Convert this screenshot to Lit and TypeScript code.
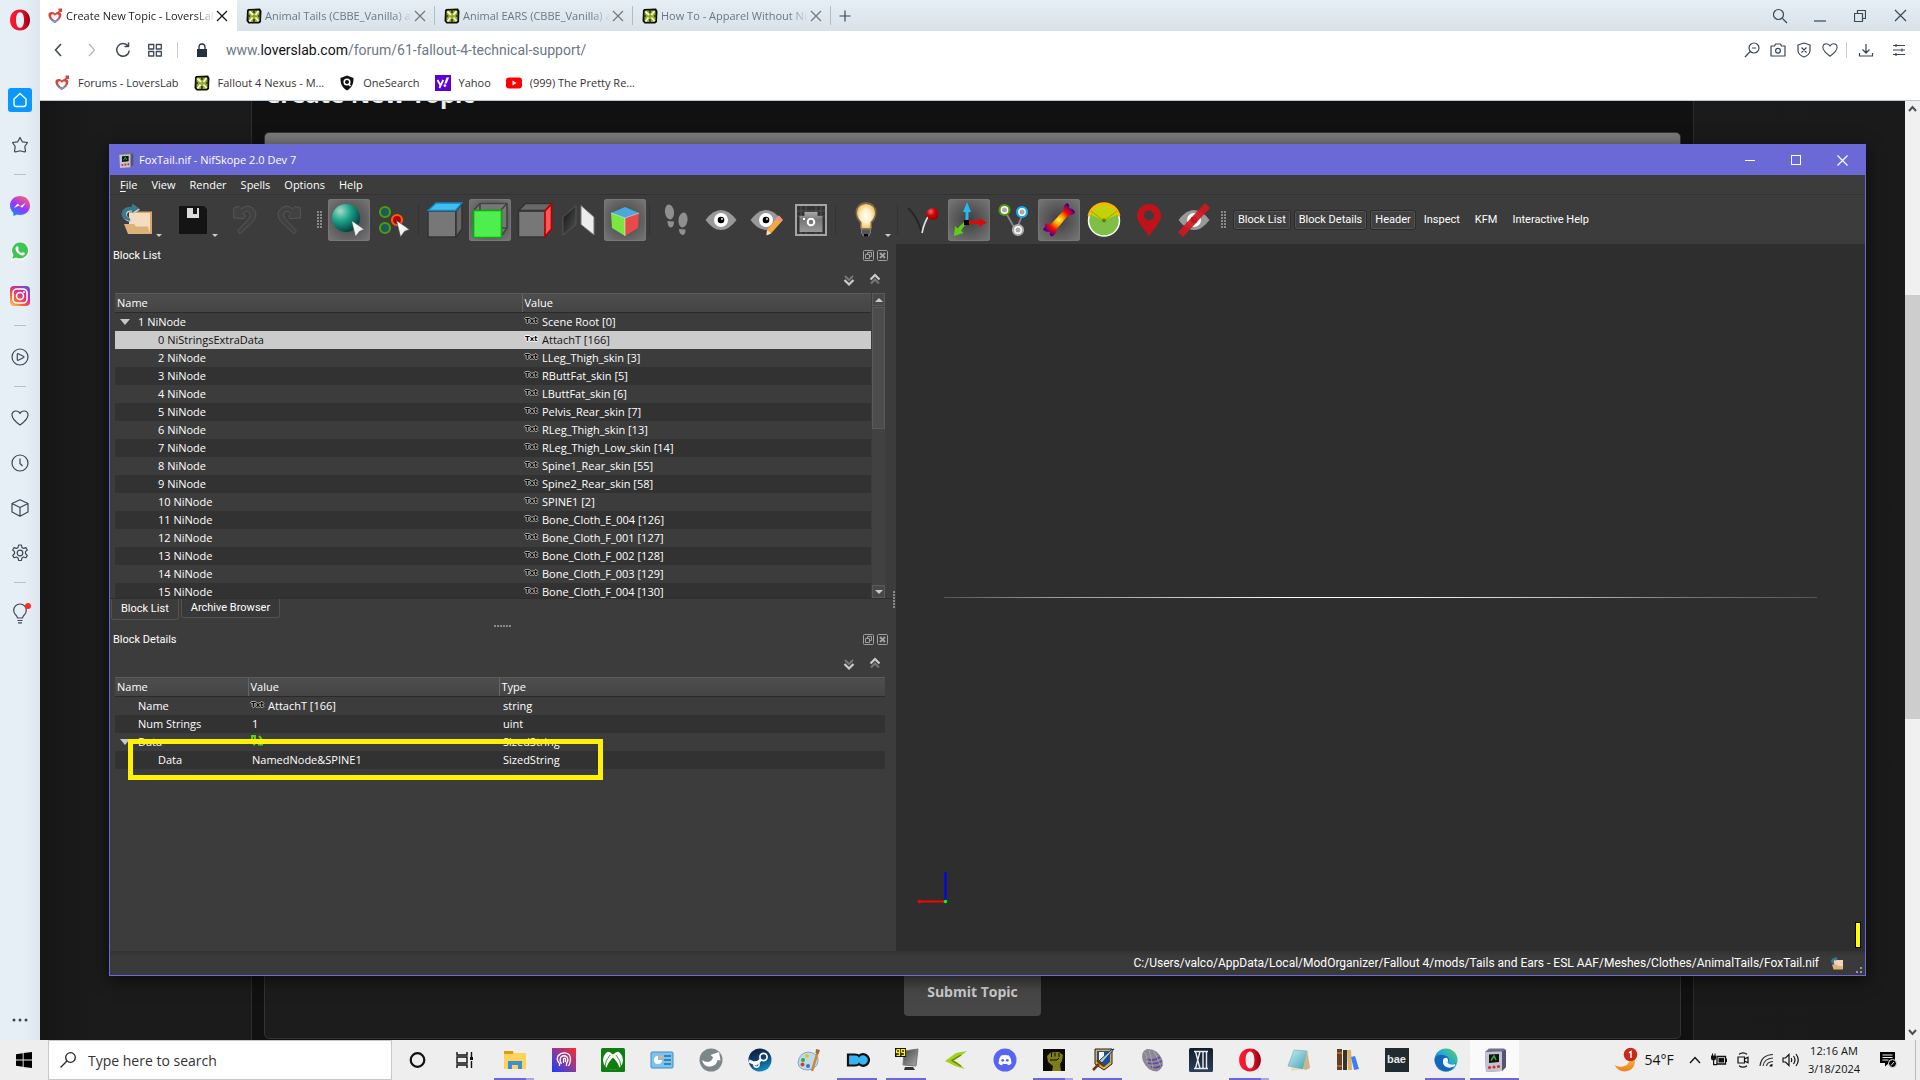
import { LitElement, html, svg, css } from "lit";
import { customElement } from "lit/decorators.js";
import { classMap } from "lit/directives/class-map.js";

const icon = (w: number, h: number, body: unknown) =>
  html`<svg class="ico" width=${w} height=${h} viewBox=${`0 0 ${w} ${h}`} aria-hidden="true">${body}</svg>`;

/* ---------- shared gradients ---------- */
const gradients = html`
  <svg class="defs" width="0" height="0" aria-hidden="true">
    <defs>
      <linearGradient id="gOpera" x1="0" x2="1"><stop offset="0" stop-color="#ff1b2d" /><stop offset="0.6" stop-color="#e3112a" /><stop offset="1" stop-color="#8f0012" /></linearGradient>
      <linearGradient id="gMess" x1="0.2" y1="1" x2="0.8" y2="0"><stop offset="0" stop-color="#0a8cff" /><stop offset="0.5" stop-color="#a033ff" /><stop offset="1" stop-color="#ff6a62" /></linearGradient>
      <linearGradient id="gInsta" x1="0" y1="1" x2="0.8" y2="0"><stop offset="0" stop-color="#ffd45c" /><stop offset="0.35" stop-color="#f5603c" /><stop offset="0.65" stop-color="#d62e88" /><stop offset="1" stop-color="#6b52d0" /></linearGradient>
      <radialGradient id="gSphere" cx="0.3" cy="0.25" r="0.85"><stop offset="0" stop-color="#a5dcc8" /><stop offset="0.45" stop-color="#18a088" /><stop offset="1" stop-color="#033" /></radialGradient>
      <linearGradient id="gCursor" x1="0" y1="0" x2="1" y2="1"><stop offset="0" stop-color="#fff" /><stop offset="0.6" stop-color="#eee" /><stop offset="1" stop-color="#888" /></linearGradient>
      <linearGradient id="gDarkPane" x1="0" y1="0" x2="1" y2="1"><stop offset="0" stop-color="#111" /><stop offset="1" stop-color="#555" /></linearGradient>
      <radialGradient id="gBulb" cx="0.5" cy="0.5" r="0.55"><stop offset="0" stop-color="#fffdf4" /><stop offset="0.5" stop-color="#fff0cf" /><stop offset="1" stop-color="#f8bd50" /></radialGradient>
      <radialGradient id="gBall" cx="0.35" cy="0.3" r="0.7"><stop offset="0" stop-color="#ff6a6a" /><stop offset="0.5" stop-color="#d40000" /><stop offset="1" stop-color="#900" /></radialGradient>
      <radialGradient id="gBone" gradientUnits="userSpaceOnUse" cx="18" cy="18" r="17"><stop offset="0" stop-color="#ff3" /><stop offset="0.3" stop-color="#ff9800" /><stop offset="0.6" stop-color="#f01000" /><stop offset="0.85" stop-color="#a00050" /><stop offset="1" stop-color="#4b0082" /></radialGradient>
      <linearGradient id="gCam" x1="0" y1="0" x2="0" y2="1"><stop offset="0" stop-color="#aaa" /><stop offset="0.4" stop-color="#777" /><stop offset="1" stop-color="#999" /></linearGradient>
      <linearGradient id="gArt" x1="0" y1="1" x2="1" y2="0"><stop offset="0" stop-color="#1a3cff" /><stop offset="0.5" stop-color="#8a3a9c" /><stop offset="1" stop-color="#ff2a2a" /></linearGradient>
      <linearGradient id="gSteam" x1="0" y1="0" x2="0.4" y2="1"><stop offset="0" stop-color="#0c1438" /><stop offset="0.6" stop-color="#0f4575" /><stop offset="1" stop-color="#1287b8" /></linearGradient>
      <linearGradient id="gEdge" x1="0" y1="1" x2="1" y2="0"><stop offset="0" stop-color="#0a59a4" /><stop offset="0.5" stop-color="#1ea5de" /><stop offset="1" stop-color="#5fd35a" /></linearGradient>
      <linearGradient id="gMoon" x1="0" y1="0" x2="0" y2="1"><stop offset="0" stop-color="#f9c440" /><stop offset="1" stop-color="#f07f1e" /></linearGradient>
      <linearGradient id="gPad" x1="0" y1="0" x2="1" y2="1"><stop offset="0" stop-color="#c9eef2" /><stop offset="1" stop-color="#3fa3b8" /></linearGradient>
      <linearGradient id="gXii" x1="0" y1="0" x2="0" y2="1"><stop offset="0" stop-color="#121d2c" /><stop offset="1" stop-color="#2c4058" /></linearGradient>
      <linearGradient id="gScreen" x1="0" y1="0" x2="1" y2="1"><stop offset="0" stop-color="#444" /><stop offset="1" stop-color="#aaa" /></linearGradient>
    </defs>
  </svg>`;

/* ---------- favicons ---------- */
const heartFav = icon(16, 16, svg`
  <path d="M8 15 C3 12 1 9 1.500 6 C2.200 3.800 5.500 3 8 5.500 C10 3.500 13.800 3.500 14.300 6.500 C14.600 9.500 12 12.500 8 15Z" fill="#d9443a"/>
  <path d="M2 9 C3 12 5.500 13.700 8 15 C10.500 13.500 12.500 12 13.800 9 C11.500 11.500 10 12.300 8 12.700 C6 12.300 4 11.500 2 9Z" fill="#6b9fd8"/>
  <path d="M8 12.500 C5.200 10.800 4 9 4.200 7.500 C4.500 5.700 7 6.200 8 8 C9 6.200 11.500 6.200 11.800 7.800 C11.900 9.500 10.300 11.300 8 12.500Z" fill="#fff"/>
  <path d="M10.500 5 L14 1.500 M11.500 1.300 h2.700 v2.700" stroke="#d9443a" stroke-width="1.700" fill="none"/>`);
const nexusFav = icon(16, 16, svg`
  <path d="M2 1 L14 0.500 L15.500 3 L15 14 L13 15.500 L2.500 15.500 L0.500 13 L1 2.500Z" fill="#0b0b0b"/>
  <path d="M3 2.500 H13 L13.500 4 V12.500 L12.500 14 H3.500 L2.500 12.500 V3.500Z" fill="#94a92b"/>
  <path d="M3.500 3.500 L7 7 M12.500 3 L9.500 7 M12.500 13 L9.500 9.500 M3.500 13.500 L6.500 9.500" stroke="#f4f7df" stroke-width="1.800"/>
  <path d="M8 1.500 V5 M8 11 V14.500 M1.500 8 H4 M12 8 H14.500" stroke="#2c3310" stroke-width="1.500"/>`);
const shieldFav = icon(16, 16, svg`
  <path d="M8 0.500 L14.500 3 C14.700 9 12.500 13 8 15.500 C3.500 13 1.300 9 1.500 3Z" fill="#111"/>
  <circle cx="8" cy="7" r="2.800" fill="none" stroke="#fff" stroke-width="1.500"/><path d="M9.500 8.700 L11.500 11" stroke="#fff" stroke-width="1.500"/>`);
const yahooFav = icon(16, 16, svg`
  <rect width="16" height="16" fill="#5f01d1"/>
  <path d="M2.500 5 L5.300 10 M8.200 5 L4.400 13" stroke="#fff" stroke-width="1.800" fill="none"/>
  <path d="M11.500 2.500 h2.600 l-2.500 6 h-2.200Z" fill="#fff"/><circle cx="9.900" cy="10.600" r="1.300" fill="#fff"/>`);
const youtubeFav = icon(16, 16, svg`<rect y="2.500" width="16" height="11" rx="3" fill="#f00"/><path d="M6.500 5.500 L10.500 8 L6.500 10.500Z" fill="#fff"/>`);

/* ---------- line icons ---------- */
const line = (w: number, body: unknown) =>
  html`<svg class="ico line" width=${w} height=${w} viewBox=${`0 0 ${w} ${w}`} aria-hidden="true">${body}</svg>`;
const crossIcon = line(12, svg`<path d="M1 1 L11 11 M11 1 L1 11"/>`);
const heartLine = (w: number) => html`<svg class="ico line" width=${w} height=${w} viewBox="0 0 18 18" aria-hidden="true">
  <path d="M9 16 C4 12.500 1 9.500 1 6 C1 3.500 2.800 2 5 2 C6.800 2 8.300 3 9 4.500 C9.700 3 11.200 2 13 2 C15.200 2 17 3.500 17 6 C17 9.500 14 12.500 9 16Z"/></svg>`;

type Side = { name: string; art?: unknown; kind?: string };
const sideItems: Side[] = [
  { name: "Home", kind: "home", art: line(16, svg`<path d="M2 7 L8 1.500 L14 7 V12 Q14 14.500 11.500 14.500 H4.500 Q2 14.500 2 12Z" stroke="#fff" stroke-width="1.400"/>`) },
  { name: "Speed Dials", art: line(18, svg`<path d="M9 1.500 L11.300 5.800 L16.500 6.500 L13.800 10.500 L14.500 15.500 Q14 16.500 9 14.800 Q4 16.500 3.500 15.500 L4.200 10.500 L1.500 6.500 L6.700 5.800Z"/>`) },
  { name: "", kind: "rule" },
  { name: "Messenger", art: icon(20, 20, svg`<path d="M10 0 C15.700 0 20 4.200 20 9.500 C20 15 15.700 19 10 19 Q8.500 19 7.200 18.600 L3.500 20 L3.300 16.700 C1.200 15 0 12.500 0 9.500 C0 4.200 4.300 0 10 0Z" fill="url(#gMess)"/><path d="M4 12 L7.500 7.500 L10.500 10 L15.500 7 L12.300 11.800 L9.200 9.500Z" fill="#fff"/>`) },
  { name: "WhatsApp", art: icon(20, 20, svg`<path d="M1 19.500 L2.500 14.500 A8.800 8.800 0 1 1 5.800 17.900Z" fill="#fff"/><path d="M10.200 1.500 a8 8 0 1 1 -4 15 L2.200 17.800 L3.500 14 A8 8 0 0 1 10.200 1.500Z" fill="#3fc552"/><path d="M6.500 5.500 Q8 4.500 8.500 6.500 Q9 7.500 8 8.500 Q9 11 11.500 12 Q12.500 10.800 13.200 11.300 Q15.500 12 14.500 13.500 Q13 15.300 9.800 13.500 Q5.500 11 5.500 7.500 Q5.600 6 6.500 5.500Z" fill="#fff"/>`) },
  { name: "Instagram", art: icon(20, 20, svg`<rect width="20" height="20" rx="4" fill="url(#gInsta)"/><rect x="3" y="3" width="14" height="14" rx="4" fill="none" stroke="#fff" stroke-width="1.600"/><circle cx="10" cy="10" r="3.500" fill="none" stroke="#fff" stroke-width="1.600"/><circle cx="14" cy="6" r="1" fill="#fff"/>`) },
  { name: "", kind: "rule" },
  { name: "Player", art: line(18, svg`<circle cx="9" cy="9" r="8"/><path d="M6.300 6.200 Q6.500 5.500 7.300 5.800 L12.700 8.500 Q13.200 9 12.700 9.500 L7.300 12.200 Q6.500 12.500 6.300 11.800Z"/>`) },
  { name: "", kind: "rule" },
  { name: "Bookmarks", art: heartLine(18) },
  { name: "History", art: line(18, svg`<circle cx="9" cy="9" r="8"/><path d="M9 4.500 V9.500 L11.500 12"/>`) },
  { name: "Extensions", art: line(18, svg`<path d="M9 0.800 L17 4.500 V13 L9 17.200 L1 13 V4.500Z M1 4.500 L9 8.500 L17 4.500 M9 8.500 V17"/>`) },
  { name: "Settings", art: line(18, svg`<circle cx="9" cy="9" r="2.800"/><path d="M7.600 1 h2.800 l0.500 2.400 l1.700 1 l2.300-0.800 l1.400 2.400 l-1.800 1.600 v2.200 l1.800 1.600 l-1.400 2.400 l-2.300-0.800 l-1.700 1 l-0.500 2.500 h-2.800 l-0.500-2.500 l-1.700-1 l-2.300 0.800 l-1.400-2.400 l1.800-1.600 v-2.200 l-1.800-1.600 l1.400-2.400 l2.300 0.800 l1.700-1Z"/>`) },
  { name: "", kind: "rule" },
  { name: "Tips", art: html`<svg class="ico line" width="24" height="24" viewBox="0 0 24 24" aria-hidden="true"><path d="M9.500 16 Q9.300 14.500 7.800 13 A6.300 6.300 0 1 1 16.200 13 Q14.700 14.500 14.500 16Z M9.500 18.500 h5 M10 20.800 h4"/><circle cx="20" cy="4" r="3" fill="#ff2d20" stroke="none"/></svg>` },
];

const operaLogo = (w: number, h: number) => html`<svg class="ico" width=${w} height=${h} viewBox="0 0 22 22" aria-hidden="true"><path fill-rule="evenodd" d="M11 0.500 C17 0.500 21 5 21 11 C21 17 17 21.500 11 21.500 C5 21.500 1 17 1 11 C1 5 5 0.500 11 0.500Z M11 3.200 C8.300 3.200 7 6.500 7 11 C7 15.500 8.300 18.800 11 18.800 C13.700 18.800 15 15.500 15 11 C15 6.500 13.700 3.200 11 3.200Z" fill="url(#gOpera)"/></svg>`;

/* ---------- NifSkope toolbar art, 36px grid ---------- */
const cursor = svg`<path d="M20.500 18.500 L33.500 27.500 L28.500 29.500 L24.500 35Z" fill="url(#gCursor)" stroke="#444" stroke-width="0.600"/>`;
const ring = (x: number, y: number, c: string, r = 5) =>
  svg`<circle cx=${x} cy=${y} r=${r} fill="#fff" stroke=${c} stroke-width="2.200"/><circle cx=${x} cy=${y} r="2.500" fill="#aaa"/>`;
const eye = svg`<path d="M2.500 18 Q10 8 18 8 Q26 8 33.500 18 Q26 28 18 28 Q10 28 2.500 18Z" fill="#999"/><circle cx="18" cy="18" r="7" fill="#fff"/><circle cx="18" cy="18" r="3.300" fill="#000"/><circle cx="19" cy="17" r="0.900" fill="#fff"/>`;
const undoPath = "M13.500 31.500 L26.500 19 Q31.500 12 26 6.500 Q20 1.500 14.500 7 L12 4.500 L7 5.500 L6.500 16 L17 16.500 L18.500 14 L16 11.500 Q20 7.500 22.500 10.500 Q24.500 13 22 16.500 L11 28.500 Q11 31.500 13.500 31.500Z";
const grid36 = (body: unknown) => icon(36, 36, body);

type Tool = { name: string; art?: unknown; kind?: "sep" | "grip" | "split"; on?: boolean };
const tools: Tool[] = [
  { name: "Open", kind: "split", art: grid36(svg`<path d="M10 10 H33 V31 H10Z" fill="#f3dcc0"/><path d="M31 10 h2 v22 h-2Z" fill="#dba868"/><path d="M10 9.500 H33 V11 H10Z" fill="#dba868"/><path d="M5 22 H15 L17 24.500 H29 L31 32 H9Z" fill="#dcb277"/><path d="M12 20 Q3 18.500 3.500 12 Q5 4.500 14 5.500 V2.500 L21 7.500 L14 12.500 V9.500 Q8 9 8 13 Q8.500 16 12.500 17Z" fill="#cfcfcf"/><path d="M11 19 Q2 17 2.500 11.500 Q4 4 13 4.800 V1.800 L20 6.500 L13 11 V8.500 Q7 8 7 12 Q7.500 15.500 11 16.500Z" fill="#367a8c"/>`) },
  { name: "Save", kind: "split", art: grid36(svg`<path d="M4 4 H29 L32 7 V32 H4Z" fill="#141414"/><path d="M12 6 h12 v10 h-12Z" fill="#dcdcdc"/><path d="M18 6 h4 v6 h-4Z" fill="#141414"/>`) },
  { name: "Undo", art: grid36(svg`<path d=${undoPath} fill="#414141" stroke="#575757"/>`) },
  { name: "Redo", art: grid36(svg`<path d=${undoPath} transform="matrix(-1 0 0 1 35 0)" fill="#414141" stroke="#575757"/>`) },
  { name: "", kind: "grip" },
  { name: "Select Object", on: true, art: grid36(svg`<circle cx="15" cy="16" r="14" fill="url(#gSphere)"/>${cursor}`) },
  { name: "Select Vertex", art: grid36(svg`<circle cx="9" cy="10" r="5" fill="#1d5a5a" stroke="#4f9a0c" stroke-width="2.200"/><circle cx="9" cy="26" r="5" fill="#1d5a5a" stroke="#4f9a0c" stroke-width="2.200"/><circle cx="21" cy="18" r="5" fill="#b00000" stroke="#ff5a10" stroke-width="2.200"/>${cursor}`) },
  { name: "", kind: "sep" },
  { name: "View Top", art: grid36(svg`<path d="M1 9 h28 v26 h-28Z" fill="#777" stroke="#333" stroke-width="1.500"/><path d="M29 9 L35 1.500 V27 L29 35Z" fill="#666" stroke="#333" stroke-width="1.500"/><path d="M1 8.500 L9 1 H35 L28.500 8.500Z" fill="#42bdf2" stroke="#1187bd" stroke-width="1.300"/>`) },
  { name: "View Front", on: true, art: grid36(svg`<path d="M2 8 L8 1.500 H35 V26 L30 33 M35 1.500 L29 8 M8 2 V26 M8 26 H35" fill="#888" fill-opacity="0.600" stroke="#444" stroke-width="1.700"/><path d="M1.500 8.500 h28 v27 h-28Z" fill="#4eee4e" stroke="#0bac0b" stroke-width="1.700"/>`) },
  { name: "View Side", art: grid36(svg`<path d="M1.500 9 h27 v26 h-27Z" fill="#777" stroke="#333" stroke-width="1.500"/><path d="M1.500 8.500 L8.500 1.500 H35 L28 8.500Z" fill="#686868" stroke="#333" stroke-width="1.500"/><path d="M28 9 L34.500 2 V27 L28 34.500Z" fill="#f45a5a" stroke="#b90000" stroke-width="1.700"/>`) },
  { name: "Flip View", art: grid36(svg`<path d="M1 15 L14 3.500 V22.500 L1 33Z" fill="url(#gDarkPane)" stroke="#555"/><path d="M19 3.500 L32 15 V33 L19 22.500Z" fill="#ececec" stroke="#777"/>`) },
  { name: "Perspective", on: true, art: grid36(svg`<path d="M4 11 L18 5 L32 11 L18 16Z" fill="#49a8dc"/><path d="M4 11 L18 16 V34 L5 26Z" fill="#79e642"/><path d="M32 11 L18 16 V34 L31 26Z" fill="#e84a4a"/><path d="M4 11 L18 16 L32 11 M18 16 V34" stroke="#fff" stroke-opacity="0.500" fill="none"/>`) },
  { name: "", kind: "sep" },
  { name: "Walk", art: grid36(svg`<g fill="#8f8f8f"><ellipse cx="11.500" cy="10" rx="4.500" ry="7.500" transform="rotate(-8 11.500 10)"/><path d="M9.500 19 L16 19.500 Q16 25 13 25.500 Q9.500 25 9.500 19Z"/><ellipse cx="25" cy="18" rx="4.500" ry="7.500" transform="rotate(8 25 18)"/><path d="M21 27 L27.500 27.500 Q27.500 33 24.500 33 Q21 32 21 27Z"/></g>`) },
  { name: "View User", art: grid36(eye) },
  { name: "Edit User View", art: grid36(svg`${eye}<path d="M31 13.500 L35 18 L23 31.500 L18.500 33 L19 28Z" fill="#f4a93c"/><path d="M31 13.500 L34 17.500 L31.500 20 L28 16.500Z" fill="#f28a9a"/><path d="M19 28 L23 31.500 L18.500 33.500Z" fill="#f4dfb8"/>`) },
  { name: "Screenshot", art: grid36(svg`<path d="M3 3 h30 v30 h-30Z" fill="#333" stroke="#a5a5a5" stroke-width="2"/><path d="M8 4 V32 M13 4 V32 M23 4 V32 M28 4 V32 M4 9 H32 M4 14 H32" stroke="#555"/><path d="M6.500 14 H11.500 V10 H24.500 V14 H29.500 V30 H6.500Z" fill="url(#gCam)"/><circle cx="18" cy="20" r="3.300" fill="#777" stroke="#fff" stroke-width="2"/><rect x="10" y="16" width="2" height="2" fill="#fff"/>`) },
  { name: "", kind: "sep" },
  { name: "Lighting", kind: "split", art: grid36(svg`<path d="M18 0 Q28.500 1 28.500 11 Q28 17 24 21 V27 H12 V21 Q8 17 7.500 11 Q7.500 1 18 0Z" fill="#a38a52" opacity="0.600"/><path d="M18 2 Q27 3 27 11 Q26.500 16 22.500 20 V26 H13.500 V20 Q9.500 16 9 11 Q9 3 18 2Z" fill="url(#gBulb)"/><path d="M13.500 27 h9 v4 l-2 3 h-5 l-2 -3Z" fill="#555" stroke="#999" stroke-width="0.700"/><rect x="16" y="32" width="4" height="2.500" fill="#000"/>`) },
  { name: "", kind: "sep" },
  { name: "Show Hidden", art: grid36(svg`<path d="M2 6 Q11 14 16 31" stroke="#262626" stroke-width="2" fill="none"/><path d="M16 31 Q18 20 24 12" stroke="#ddd" stroke-width="1.800" fill="none"/><circle cx="26.500" cy="12" r="6" fill="url(#gBall)"/>`) },
  { name: "Show Axes", on: true, art: grid36(svg`<path d="M14.500 19 V10 H12 L16 0 L20 10 H17.500 V19Z" fill="#29b6f6"/><path d="M17 18.800 H28 V16 L36 20.500 L28 25 V22 H17Z" fill="#e00808"/><path d="M15.500 21 L10 28.500 L12.500 31 L3 34 L4 24 L6.500 26.500 L13.500 19.500Z" fill="#5fcc18"/><rect x="13" y="18" width="5" height="5" fill="#000"/>`) },
  { name: "Show Nodes", art: grid36(svg`<path d="M9 9 L20 29 L27 11" stroke="#888" stroke-width="1.800" fill="none"/>${ring(8.5, 8, "#4f9a0c")}${ring(26, 10, "#17a6ee")}${ring(22, 28, "#aaa")}`) },
  { name: "Show Constraints", on: true, art: grid36(svg`<path d="M4 25 Q3 21 7 21.500 Q9 22 10 22 L22 9 Q22 3 26 1 Q29 2 28 6 Q34 7 34 11 Q31 14 27 13.500 L16 27 Q16 32 11 34.500 Q8 34 9 30 Q3 30 2 27Z" fill="url(#gBone)"/>`) },
  { name: "Show Bounds", art: grid36(svg`<circle cx="18" cy="18.500" r="15.500" fill="#7fbf45" stroke="#fff" stroke-width="1.500"/><path d="M3.500 12 A15.500 15.500 0 0 1 32.500 12 L18 19Z" fill="#c3d208"/><path d="M2.800 14 A15.500 15.500 0 0 1 33.200 14" fill="none" stroke="#ffb300" stroke-width="2.500"/><path d="M5 9 L18 19 L31 9" stroke="#94a800" fill="none"/><circle cx="18" cy="18.500" r="2" fill="#6a7a10"/>`) },
  { name: "Show Markers", art: grid36(svg`<path fill-rule="evenodd" d="M18 2 C25 2 30 7 30 14 C30 20 24 25 18 34.500 C12 25 6 20 6 14 C6 7 11 2 18 2Z M18 8.500 A5 5 0 1 0 18 18.500 A5 5 0 1 0 18 8.500Z" fill="#c1121c"/>`) },
  { name: "Hide All", art: grid36(svg`${eye}<path d="M29 1 L34 6 L7 35 L2 30Z" fill="#cf1820" fill-opacity="0.930"/>`) },
  { name: "", kind: "grip" },
];

const panelToggles = [
  ["Block List", true], ["Block Details", true], ["Header", true], ["Inspect", false], ["KFM", false], ["Interactive Help", false],
] as [string, boolean][];

const blocks: [string, string][] = [
  ["1 NiNode", "Scene Root [0]"],
  ["0 NiStringsExtraData", "AttachT [166]"],
  ["2 NiNode", "LLeg_Thigh_skin [3]"],
  ["3 NiNode", "RButtFat_skin [5]"],
  ["4 NiNode", "LButtFat_skin [6]"],
  ["5 NiNode", "Pelvis_Rear_skin [7]"],
  ["6 NiNode", "RLeg_Thigh_skin [13]"],
  ["7 NiNode", "RLeg_Thigh_Low_skin [14]"],
  ["8 NiNode", "Spine1_Rear_skin [55]"],
  ["9 NiNode", "Spine2_Rear_skin [58]"],
  ["10 NiNode", "SPINE1 [2]"],
  ["11 NiNode", "Bone_Cloth_E_004 [126]"],
  ["12 NiNode", "Bone_Cloth_F_001 [127]"],
  ["13 NiNode", "Bone_Cloth_F_002 [128]"],
  ["14 NiNode", "Bone_Cloth_F_003 [129]"],
  ["15 NiNode", "Bone_Cloth_F_004 [130]"],
];

const txt = html`<span class="txt">Txt</span>`;
const expander = html`<button class="twist" aria-label="Collapse">${icon(10, 6, svg`<path d="M0 0 H10 L5 6Z" fill="#c8c8c8"/>`)}</button>`;
const foxIcon = (s: number) => html`<svg class="ico" width=${s} height=${s} viewBox="0 0 24 24" aria-hidden="true">
  <path d="M2 4 L6 0.500 H21 L23 2 V19 L19 23 L3 24Z" fill="#6f6f8c"/><path d="M2 4 L19 3.500 V23 L3 24Z" fill="#c3c3d4"/><path d="M19 3.500 L23 2 V19 L19 23Z" fill="#54546e"/><path d="M6 6.500 L16 6 V14 L6 15Z" fill="#101510"/><path d="M8 12.500 L11 8 L13 12" stroke="#3fae3f" stroke-width="1.500" fill="none"/><circle cx="6.500" cy="19.500" r="1.600" fill="#c33"/><circle cx="11" cy="19" r="1.600" fill="#c33"/><circle cx="15.500" cy="18.500" r="1.600" fill="#c33"/></svg>`;

/* ---------- taskbar ---------- */
const tb = (body: unknown) => icon(24, 24, body);
type App = { name: string; art: unknown; run?: "open" | "multi"; active?: boolean };
const apps: App[] = [
  { name: "Cortana", art: tb(svg`<ellipse cx="12.500" cy="12" rx="6.800" ry="6.800" fill="none" stroke="#111" stroke-width="2.200"/>`) },
  { name: "Task View", art: tb(svg`<path d="M3 4 v3 h10 v-3 M3 20 v-3 h10 v3 M3 9 h10 v6 h-10Z M17.500 4 v5 M17.500 13 v7" fill="none" stroke="#111" stroke-width="1.400"/><rect x="16" y="9" width="3" height="3" fill="#111"/>`) },
  { name: "File Explorer", run: "multi", art: tb(svg`<path d="M1 3 h9 l1 2 h12 v16 h-22Z" fill="#ffd35a"/><path d="M1 3 h9 v3 h-9Z" fill="#dd9a12"/><path d="M5 13 h14 v8 h-4 v-4 h-6 v4 h-4Z" fill="#3a8fd8"/>`) },
  { name: "Face App", art: tb(svg`<rect width="24" height="24" fill="url(#gArt)"/><path d="M7.500 18 V15.500 Q4 12 6 8 Q8.500 4.500 13 4.800 Q18.500 5.500 18.500 11 Q18.500 15 16.500 18 M9.500 16 Q7 12 9 9 Q12 6.500 15 9 Q17 12 14.500 15.500 V18 M11.500 15 V11 Q12.500 9.500 13.500 11 V14" stroke="#fff" stroke-width="1.300" fill="none"/>`) },
  { name: "Xbox", art: tb(svg`<rect width="24" height="24" rx="1.500" fill="#0f7d0f"/><circle cx="12" cy="12" r="10" fill="#fff"/><path d="M6 3.500 Q9 3.500 12 6.500 Q15 3.500 18 3.500 Q15 1 12 1 Q9 1 6 3.500Z" fill="#0f7d0f"/><path d="M12 9.500 Q17.500 15 18.500 20 Q12 24 5.500 20 Q6.500 15 12 9.500Z" fill="#0f7d0f"/><path d="M9 7 Q4 13 4 18.500 M15 7 Q20 13 20 18.500" stroke="#0f7d0f" stroke-width="0.800" fill="none"/>`) },
  { name: "Control Panel", art: tb(svg`<rect x="1" y="4" width="22" height="16" rx="1" fill="#7cc4ee" stroke="#3c8fc4"/><path d="M8 8 A4 4 0 1 0 12 12 H8Z" fill="#fff"/><path d="M9.500 7 A4 4 0 0 1 13 10.500 H9.500Z" fill="#ffb04a"/><path d="M14 8 h7 M14 12 h7 M14 16 h7" stroke="#1f6ea8" stroke-width="1.600"/>`) },
  { name: "Sync", art: tb(svg`<circle cx="12" cy="12" r="11.500" fill="#7d8689"/><path d="M3 12 Q5 19.500 12 18.500 Q18 17 18.500 12 L21.500 12.500 L20 4 L11.500 7 L14 9 Q13 13.500 9 14 Q5 14 3 12Z" fill="#fff"/>`) },
  { name: "Steam", art: tb(svg`<circle cx="12" cy="12" r="11.500" fill="url(#gSteam)"/><circle cx="15.500" cy="9" r="3.600" fill="none" stroke="#fff" stroke-width="1.700"/><path d="M1 13 L8 16 L13 11.500" stroke="#fff" stroke-width="3" fill="none"/><circle cx="8.500" cy="16.500" r="2.700" fill="none" stroke="#fff" stroke-width="1.400"/>`) },
  { name: "Paint", art: tb(svg`<path d="M11 4 Q22 5 21 13 Q20 21 11 22 Q2 22 1 15 Q2 5 11 4Z" fill="#bcdcea" stroke="#7faabf"/><circle cx="6" cy="12" r="2" fill="#35a84a"/><circle cx="10" cy="8" r="2" fill="#e8c02a"/><circle cx="5.500" cy="16.500" r="2" fill="#d64030"/><circle cx="11" cy="18" r="2" fill="#3a70d0"/><path d="M21 3 L15 23" stroke="#d9822b" stroke-width="2.500"/><path d="M19 1 L23 2 L21.500 6 L18.500 5Z" fill="#a86a3a"/>`) },
  { name: "Mod Organizer", run: "open", art: tb(svg`<path d="M2 6.500 H9 Q12 6.500 13 8 Q16 5 20 7 Q23 9 23 12 Q22.500 16 20 17 Q16 19 13 16 Q12 17.500 9 17.500 H2Z" fill="#35b6f2" stroke="#101010" stroke-width="2.200"/>`) },
  { name: "Monitor", run: "open", art: tb(svg`<path d="M9 3 L23 1 L21 18 L8 17Z" fill="url(#gScreen)" stroke="#777"/><path d="M10 19 h8 l2 3 h-11Z" fill="#333"/><rect width="11" height="9" fill="#111"/><path d="M1.500 1.700 h3 v5.600 h-3 M4.500 4.500 h-3 v-2.800 M6.500 4.500 v-2.800 h3 v5.600 h-3 M6.500 4.500 h3" stroke="#ffee10" stroke-width="1.300" fill="none"/>`) },
  { name: "Launcher", art: tb(svg`<path d="M23 3 L12 5 L1 13 L11 18 L21 21 L13 14 L10 12.500 L16 8.500Z" fill="#a4cf1e"/><path d="M17 7 L8 12.500 L17 18" stroke="#5d8a0a" stroke-width="1.400" fill="none"/>`) },
  { name: "Discord", art: tb(svg`<circle cx="12" cy="12" r="11.500" fill="#5865f2"/><path d="M8 7.500 Q12 6.500 16 7.500 Q18.800 11 18.500 15.500 Q17 17 15 17.200 L14 15.800 Q12 16.300 10 15.800 L9 17.200 Q7 17 5.500 15.500 Q5.200 11 8 7.500Z" fill="#fff"/><circle cx="9.700" cy="12.300" r="1.400" fill="#5865f2"/><circle cx="14.300" cy="12.300" r="1.400" fill="#5865f2"/>`) },
  { name: "Vortex Fist", run: "multi", art: tb(svg`<rect x="1" y="1" width="22" height="22" fill="#0b0b06"/><path d="M5 8 L8 5 L12 4 L17 4 L21 7 L20 13 L18 16 L19 23 H10 L11 18 L6 14Z" fill="#7d7f14"/><path d="M9.500 5 v4 M13 4.500 v4 M17 5 v4 M8 12 h7 l2 -2" stroke="#0b0b06" fill="none"/>`) },
  { name: "Sword", run: "open", art: tb(svg`<path d="M4 1 H21 V16 L13 22 L4 16Z" fill="#e0b040" stroke="#222"/><path d="M6 3 H19 V14 L13 19 L6 14Z" fill="#1d4f9c"/><path d="M8 4 h5 v9 h-5Z" fill="#f3f3f3"/><path d="M23 1 L11 15 L8 13 L20 2Z" fill="#a8cdf0" stroke="#234"/><path d="M6 12 L13 18 M8 16 L2 22" stroke="#6b3a10" stroke-width="2.500"/>`) },
  { name: "Creation Kit", art: tb(svg`<path d="M7 1 Q17 0 22 11 Q25 20 17 23.500 Q7 23 3 13 Q0 4 7 1Z" fill="#8d8994"/><path d="M7 11 Q14 14 20 9 M8 15 Q15 17 22 13 M11 19 Q17 21 22 17" stroke="#66499a" stroke-width="1.700" fill="none"/><path d="M4 4 Q8 8 7 15 M9 2 Q11 8 13 21 M14 3 Q16 7 21 19" stroke="#b5b0b8" stroke-width="0.700" fill="none"/>`) },
  { name: "FFXII", art: tb(svg`<rect width="24" height="24" rx="1.500" fill="url(#gXii)"/><path d="M6.500 3.500 L11 20.500 M11 3.500 L6.500 20.500 M14 3.500 V20.500 M17.500 3.500 V20.500 M5 3.500 h14 M5 20.500 h14" stroke="#e8edf2" stroke-width="1.400" fill="none"/>`) },
  { name: "Opera", run: "multi", art: operaLogo(24, 24) },
  { name: "Notepad", art: tb(svg`<path d="M8 2 L21 3 L23 20 L4 23Z" fill="#e9dcc0"/><path d="M7 2 L20 3 L16 21 L1 18Z" fill="url(#gPad)" stroke="#7aa" stroke-width="0.600"/><path d="M20 3 L23 20 L19 22 L16 21Z" fill="#c9b68a"/>`) },
  { name: "Library", art: tb(svg`<path d="M1 1 h5 v21 h-5Z" fill="#6b3f1d"/><path d="M7 2 h4 v20 h-4Z" fill="#35322f"/><path d="M11 2 h4 l1 20 h-4Z" fill="#d9b06a"/><path d="M15 9 l4 -1 l4 13 l-5 1Z" fill="#3a7ef0"/><path d="M1 5 h5 M1 18 h5" stroke="#d0902a"/>`) },
  { name: "BAE", art: html`<span class="bae">bae</span>` },
  { name: "Edge", run: "open", art: tb(svg`<circle cx="12" cy="12" r="11.500" fill="url(#gEdge)"/><path d="M0.500 12 Q2 6 9 7 Q15 8 15 12 Q15 14 13.500 14.500 Q15 17.500 22 15.500 Q19 22 12 23.500 Q3 22 0.500 12Z" fill="#1467b8"/><path d="M9 12 Q10 9 13 10 Q15 12 13.500 14.500 Q15 17.500 21 16 Q22 17 20 18.500 Q17 20 14 19.500 Q8 18 9 12Z" fill="#eef7fc"/>`) },
  { name: "NifSkope", run: "open", active: true, art: foxIcon(24) },
];

const gripDots = (cols: number, rows: number) => {
  const dots = [];
  for (let x = 0; x < cols; x++) for (let y = 0; y < rows; y++) dots.push(svg`<rect x=${x * 3} y=${y * 3} width="2" height="2" fill="#8a8a8a"/>`);
  return icon(cols * 3, rows * 3, dots);
};

@customElement("app-root")
export class AppRoot extends LitElement {
  static styles = css`
    :host { display: flex; flex-direction: column; height: 100vh; position: relative; overflow: hidden; background: #1a1a1a; font: 11px/16px "Open Sans", "Noto Sans", sans-serif; color: #222; }
    * { box-sizing: border-box; }
    button { appearance: none; border: 0; background: none; padding: 0; margin: 0; font: inherit; color: inherit; cursor: pointer; display: flex; align-items: center; justify-content: center; }
    a { color: inherit; text-decoration: none; }
    .ico { display: block; flex: none; }
    .line { fill: none; stroke: #3a4754; stroke-width: 1.2; stroke-linejoin: round; }
    .defs { position: absolute; }
    .desk { flex: 1; display: flex; min-height: 0; }

    .side { width: 40px; background: linear-gradient(90deg, #e6eef6 60%, #dde5ee); display: flex; flex-direction: column; align-items: center; }
    .brand { height: 77px; padding-top: 9px; align-items: flex-start; }
    .slot { width: 40px; height: 45px; }
    .slot.home .pad { background: #0a98ff; border-radius: 3px; width: 24px; height: 24px; display: flex; align-items: center; justify-content: center; }
    .rule { width: 12px; height: 1px; margin: 7px 0 8px; border: 0; background: #b3c1cf; flex: none; }
    .more { margin-top: auto; height: 40px; width: 40px; }

    .browser { flex: 1; min-width: 0; display: flex; flex-direction: column; background: #fff; }
    .tabs { height: 31px; display: flex; align-items: stretch; background: linear-gradient(#e5edf5, #d9e1e9); }
    .tab { width: 198px; display: flex; align-items: center; padding: 0 8px 0 9px; border-right: 1px solid transparent; color: #6a7886; }
    .tab + .tab { border-right-color: #b4c0cc; border-image: linear-gradient(transparent 22%, #b0bcc8 22%, #b0bcc8 78%, transparent 78%) 1; border-left: 0; border-top: 0; border-bottom: 0; }
    .tab.current { width: 197px; background: #fff; color: #1c1c1c; padding-left: 7px; }
    .tab a { flex: 1; min-width: 0; display: flex; align-items: center; gap: 3px; }
    .tab .label { overflow: hidden; white-space: nowrap; mask-image: linear-gradient(90deg, #000 86%, transparent 99%); flex: 1; font-size: 11px; line-height: 20px; }
    .tab .line { stroke: #777; }
    .tab.current .line { stroke: #111; }
    .tabs .plus { width: 28px; }
    .tabs .fill { flex: 1; }
    .wbtn { width: 40px; }
    .address { height: 38px; display: flex; align-items: center; padding: 0 5px 0 3px; }
    .address button { width: 32px; height: 28px; }
    .address .dim { opacity: 0.4; }
    .address .bar { width: 1px; height: 16px; background: #c4ccd4; margin: 0 8px 0 6px; }
    .address .bar.late { margin: 0 6px 0 3px; }
    .address .url { flex: 1; min-width: 0; font: 14px/20px Roboto, sans-serif; color: #6a7886; white-space: nowrap; padding-left: 8px; }
    .url b { font-weight: 400; color: #111; }
    .address .tight { width: 26px; }
    .address .tight.dl { margin-right: 4px; }
    .marks { height: 32px; display: flex; align-items: center; gap: 15px; padding: 0 14px 4px; border-bottom: 1px solid #b8c8d6; color: #333; }
    .marks a { display: flex; align-items: center; gap: 8px; white-space: nowrap; }

    .pagewrap { flex: 1; min-height: 0; display: flex; }
    .page { flex: 1; min-width: 0; overflow: hidden; display: flex; justify-content: center; background: linear-gradient(90deg, #161616, #1b1b1b 60px, #1a1a1a); }
    .column { width: 1443px; margin: 0 12px; background: #111; border: solid #2c2c2c; border-width: 0 1px; padding: 0 12px 1px; display: flex; flex-direction: column; }
    .column h1 { margin: -23px 0 22px; font: 700 24px/32px "Open Sans", sans-serif; color: #eee; padding-left: 1px; }
    .panel { flex: 1; border: 1px solid #333; border-radius: 5px; background: linear-gradient(#7a7a7a, #707070 42px, #1c1c1c 42px); display: flex; align-items: flex-end; justify-content: center; padding-bottom: 22px; }
    .submit { width: 137px; height: 48px; border-radius: 4px; background: #474747; color: #ccc; font: 700 14px/20px "Open Sans", sans-serif; }
    .scroll { width: 15px; background: #f0f0f0; display: flex; flex-direction: column; align-items: center; padding: 4px 0; }
    .scroll .track { flex: 1; width: 15px; padding: 183px 0 310px; display: flex; }
    .scroll .thumb { flex: 1; background: #cdcdcd; }

    .window { position: absolute; top: 144px; left: 109px; right: 54px; bottom: 104px; display: flex; flex-direction: column; border: 1px solid #6b69d6; background: #3c3c3c; color: #fff; box-shadow: 0 4px 16px rgba(0, 0, 0, 0.6); }
    .title { height: 30px; display: flex; align-items: center; padding-left: 8px; background: #6b69d6; }
    .title .cap { flex: 1; padding-left: 5px; }
    .title button { width: 46px; height: 30px; }
    .menu { height: 20px; display: flex; align-items: center; gap: 14px; padding-left: 10px; border-bottom: 1px solid #333; }
    .menu u { text-underline-offset: 2px; }
    .tools { height: 49px; display: flex; align-items: center; }
    .tool { width: 42px; height: 42px; margin: 0 1px 0 2px; border-radius: 2px; }
    .tool.split { width: 53px; justify-content: flex-start; padding-left: 7px; }
    .tool.split::after { content: ""; align-self: flex-end; margin: 0 0 4px 1px; border: 3px solid transparent; border-top-color: #ccc; border-bottom: 0; }
    .tool.on { background: radial-gradient(#3e3e3e, #777); border: 1px solid #777; }
    .tsep { width: 1px; height: 31px; margin: 0 3px 0 2px; background: #343434; }
    .grip { width: 14px; display: flex; justify-content: center; padding-left: 2px; }
    .toggles { display: flex; gap: 3px; padding-left: 3px; font-family: Roboto, sans-serif; }
    .toggle { height: 20px; padding: 0 4px; border: 1px solid transparent; border-radius: 3px; white-space: nowrap; }
    .toggle.on { border-color: #2b2b2b; box-shadow: inset 0 0 0 1px #525252; background: #404040; }
    .toggle.plain { margin-right: 2px; }

    .work { flex: 1; min-height: 0; display: flex; }
    .dock { width: 786px; flex: none; display: flex; flex-direction: column; position: relative; }
    .dockhead { display: flex; height: 24px; align-items: center; gap: 3px; padding: 0 8px 0 3px; font-family: Roboto, sans-serif; }
    .dockhead h2 { flex: 1; margin: 0; font: inherit; }
    .dockhead button { padding-bottom: 2px; }
    .dockbar { display: flex; justify-content: flex-end; gap: 14px; height: 25px; align-items: center; padding: 0 15px 1px 0; }
    .list { height: 305px; margin: 0 11px 0 5px; display: flex; overflow: hidden; }
    .listview { flex: 1; overflow: hidden; }
    table { width: 100%; border-collapse: collapse; table-layout: fixed; }
    th { height: 19px; padding: 0 2px; text-align: left; font-weight: 400; background: linear-gradient(#4e4e4e, #444); border-top: 1px solid #5c5c5c; border-bottom: 1px solid #2a2a2a; }
    th + th { border-left: 1px solid #666; }
    td { height: 18px; padding: 0 4px; line-height: 16px; white-space: nowrap; }
    td.iconic { padding-left: 2px; }
    tr:nth-child(even) td { background: #323232; }
    tr.sel td { background: #cbcbcb; color: #111; }
    .name { display: flex; align-items: center; padding-left: 39px; height: 18px; }
    .name.root { padding-left: 0; }
    .val { display: flex; align-items: center; gap: 3px; }
    .one .name { padding-left: 19px; }
    .top .name { padding-left: 0; }
    .twist { width: 11px; margin-right: 8px; }
    .txt { font: 700 7px/12px "DejaVu Sans", sans-serif; width: 15px; padding: 0 0 2px 1px; color: #000; text-shadow: 1px 0 #aaa, -1px 0 #aaa, 0 1px #aaa, 0 -1px #aaa; flex: none; }
    .sel .txt { text-shadow: 1px 0 #fff, -1px 0 #fff, 0 1px #fff, 0 -1px #fff; }
    .vscroll { width: 13px; margin-left: 1px; background: #414141; display: flex; flex-direction: column; }
    .vscroll button { height: 13px; border: 1px solid #5a5a5a; background: #484848; flex: none; }
    .vscroll .vthumb { height: 122px; margin-top: 1px; border: 1px solid #5a5a5a; background: #4c4c4c; }
    .vscroll .gap { flex: 1; }
    .dtabs { display: flex; align-items: flex-start; border-top: 1px solid #2f2f2f; padding-left: 1px; gap: 2px; height: 22px; font-family: Roboto, sans-serif; }
    .dtab { height: 21px; padding: 0 9px; border: 1px solid #525252; border-top: 0; border-radius: 0 0 3px 3px; }
    .dtab.back { height: 19px; background: #383838; }
    .hsplit { height: 8px; display: flex; justify-content: center; align-items: flex-end; }
    .details { margin: 0 11px 0 5px; }
    .vsplit { position: absolute; right: 0; top: 347px; }
    .mark { position: absolute; left: 18px; top: 495px; width: 475px; height: 41px; border: 5px solid #fff200; }
    .view { flex: 1; background: #2e2e2e; position: relative; }
    .horizon { position: absolute; left: 48px; right: 48px; top: 353px; height: 1px; background: linear-gradient(90deg, #555, #999 12%, #aaa 20%, #fff 40%, #fff 50%, #bbb 72%, #777 85%, #555); }
    .axes { position: absolute; left: 21px; bottom: 47px; }
    .meter { position: absolute; right: 4px; bottom: 3px; width: 6px; height: 26px; background: #ff0; border: 1px solid #000; }
    .status { height: 24px; display: flex; align-items: center; justify-content: flex-end; gap: 11px; padding-right: 2px; background: linear-gradient(#333, #3a3a3a 6px); font: 12px/16px Roboto, sans-serif; }
    .status .resize { align-self: flex-end; }

    .taskbar { height: 40px; display: flex; background: #eee; color: #111; }
    .taskbar .start { width: 48px; }
    .find { width: 344px; display: flex; align-items: center; gap: 12px; padding-left: 11px; background: #fff; border: 1px solid #c8c8c8; }
    .find input { flex: 1; min-width: 0; border: 0; outline: 0; padding: 1px 0 0; background: none; font: 14px/20px "Open Sans", sans-serif; color: #333; }
    .find input::placeholder { color: #333; opacity: 1; }
    .apps { display: flex; flex: 1; }
    .app { width: 49px; height: 40px; position: relative; }
    .app.active { background: #fafafa; }
    .app.run::after { content: ""; position: absolute; left: 4px; right: 5px; bottom: 0; height: 2px; background: #6b69d6; }
    .app.active.run::after { left: 0; right: 0; }
    .app.multi::after { background: linear-gradient(90deg, #6b69d6 32px, #a8a7e6 32px); }
    .bae { width: 24px; height: 24px; background: #1f2b2e; color: #e8e8e8; font: 700 11px/22px "Liberation Sans", sans-serif; text-align: center; }
    .tray { display: flex; align-items: center; }
    .tray button { height: 40px; }
    .weather { gap: 6px; width: 72px; font-size: 14px; padding-right: 6px; }
    .tray .t { width: 24px; }
    .clock { width: 62px; flex-direction: column; line-height: 18px; }
    .notes { width: 46px; margin-right: 4px; }
    .peek { width: 5px; border-left: 1px solid #bbb; height: 40px; }
  `;

  private renderSide(s: Side) {
    if (s.kind === "rule") return html`<hr class="rule" />`;
    return html`<button class=${classMap({ slot: true, home: s.kind === "home" })} aria-label=${s.name}>
      ${s.kind === "home" ? html`<span class="pad">${s.art}</span>` : s.art}</button>`;
  }

  private renderTab(label: string, fav: unknown, current = false) {
    return html`<div class=${classMap({ tab: true, current })}>
      <a href="#tab">${fav}<span class="label">${label}</span></a>
      <button aria-label="Close tab">${crossIcon}</button>
    </div>`;
  }

  private renderBrowser() {
    return html`<div class="browser">
      <div class="tabs">
        ${this.renderTab("Create New Topic - LoversLab", heartFav, true)}
        ${this.renderTab("Animal Tails (CBBE_Vanilla) at", nexusFav)}
        ${this.renderTab("Animal EARS (CBBE_Vanilla) at", nexusFav)}
        ${this.renderTab("How To - Apparel Without Nif", nexusFav)}
        <button class="plus" aria-label="New tab">${line(12, svg`<path d="M6 0.500 V11.500 M0.500 6 H11.500"/>`)}</button>
        <span class="fill"></span>
        <button class="wbtn" aria-label="Search tabs">${line(16, svg`<circle cx="6.500" cy="6.500" r="5"/><path d="M10.500 10.500 L15 15"/>`)}</button>
        <button class="wbtn" aria-label="Minimize">${line(12, svg`<path d="M0 11 H12"/>`)}</button>
        <button class="wbtn" aria-label="Restore">${line(12, svg`<path d="M0.500 3.500 H8.500 V11.500 H0.500Z M3.500 3.500 V0.500 H11.500 V8.500 H8.500"/>`)}</button>
        <button class="wbtn" aria-label="Close">${line(13, svg`<path d="M1 1 L12 12 M12 1 L1 12"/>`)}</button>
      </div>
      <div class="address">
        <button aria-label="Back">${line(16, svg`<path d="M10 2 L4.500 8 L10 14" stroke-width="1.600"/>`)}</button>
        <button class="dim" aria-label="Forward">${line(16, svg`<path d="M6 2 L11.500 8 L6 14"/>`)}</button>
        <button aria-label="Reload">${line(16, svg`<path d="M13 4 A6.300 6.300 0 1 0 14.300 8.500 M13.500 0.500 V4.500 H9.500" stroke-width="1.500"/>`)}</button>
        <button aria-label="Speed Dial">${line(14, svg`<path d="M0.700 1.500 h5 v4.500 h-5Z M8.300 1.500 h5 v4.500 h-5Z M0.700 8.500 h5 v4.500 h-5Z M8.300 8.500 h5 v4.500 h-5Z" stroke-width="1.300"/>`)}</button>
        <span class="bar"></span>
        <button aria-label="Site information">${icon(12, 14, svg`<path d="M1 6 h10 v8 h-10Z" fill="#243240"/><path d="M3 6 V4 Q3 1 6 1 Q9 1 9 4 V6" fill="none" stroke="#243240" stroke-width="1.300"/>`)}</button>
        <span class="url">www.<b>loverslab.com</b>/forum/61-fallout-4-technical-support/</span>
        <button class="tight" aria-label="Zoom">${line(16, svg`<circle cx="10" cy="6" r="5"/><path d="M6.300 9.500 L1 15 M7.800 6 H12.200"/>`)}</button>
        <button class="tight" aria-label="Snapshot">${line(16, svg`<path d="M1 4 H4.500 L5.500 2 H10.500 L11.500 4 H15 V14 H1Z"/><circle cx="8" cy="8.800" r="2.400"/>`)}</button>
        <button class="tight" aria-label="Ad blocker">${line(16, svg`<path d="M8 1 L14 3 V9 Q13.500 13 8 15 Q2.500 13 2 9 V3Z M5.500 5.500 L10.500 10.500 M10.500 5.500 L5.500 10.500"/>`)}</button>
        <button class="tight" aria-label="Add to bookmarks">${heartLine(16)}</button>
        <span class="bar late"></span>
        <button class="tight dl" aria-label="Downloads">${line(16, svg`<path d="M8 2 V11 M4.500 7.500 L8 11 L11.500 7.500 M1.500 11 V14 H14.500 V11"/>`)}</button>
        <button aria-label="Easy setup">${line(14, svg`<path d="M1 2.500 H13 M1 7 H13 M1 11.500 H13 M4 1 V4 M10 5.500 V8.500 M4 10 V13"/>`)}</button>
      </div>
      <nav class="marks" aria-label="Bookmarks bar">
        <a href="#forums">${heartFav}Forums - LoversLab</a>
        <a href="#nexus">${nexusFav}Fallout 4 Nexus - M...</a>
        <a href="#onesearch">${shieldFav}OneSearch</a>
        <a href="#yahoo">${yahooFav}Yahoo</a>
        <a href="#youtube">${youtubeFav}(999) The Pretty Re...</a>
      </nav>
      <div class="pagewrap">
        <main class="page">
          <section class="column">
            <h1>Create New Topic</h1>
            <div class="panel"><button class="submit">Submit Topic</button></div>
          </section>
        </main>
        <div class="scroll">
          ${icon(9, 7, svg`<path d="M1 6 L4.500 2 L8 6" fill="none" stroke="#505050" stroke-width="2"/>`)}
          <div class="track"><div class="thumb"></div></div>
          ${icon(9, 7, svg`<path d="M1 1 L4.500 5 L8 1" fill="none" stroke="#505050" stroke-width="2"/>`)}
        </div>
      </div>
    </div>`;
  }

  private renderTool(t: Tool) {
    if (t.kind === "sep") return html`<span class="tsep"></span>`;
    if (t.kind === "grip") return html`<span class="grip">${gripDots(2, 6)}</span>`;
    return html`<button class=${classMap({ tool: true, split: t.kind === "split", on: !!t.on })} aria-label=${t.name}>${t.art}</button>`;
  }

  private renderDockHead(title: string) {
    return html`<div class="dockhead">
        <h2>${title}</h2>
        <button aria-label="Float">${icon(11, 11, svg`<rect x="0.500" y="0.500" width="10" height="10" rx="1" fill="none" stroke="#a0a0a0"/><path d="M2.500 4.500 h4 v4 h-4Z M4.500 4 V2.500 h4 v4 H7" fill="none" stroke="#a0a0a0"/>`)}</button>
        <button aria-label="Close">${icon(11, 11, svg`<rect x="0.500" y="0.500" width="10" height="10" rx="1" fill="none" stroke="#a0a0a0"/><path d="M3 3 L8 8 M8 3 L3 8" stroke="#a0a0a0" stroke-width="2"/>`)}</button>
      </div>
      <div class="dockbar">
        <button aria-label="Expand all">${icon(12, 14, svg`<path d="M2 3 L6 7 L10 3" fill="none" stroke="#777" stroke-width="2"/><path d="M1.500 7 L6 11.500 L10.500 7" fill="none" stroke="#ccc" stroke-width="2.200"/>`)}</button>
        <button aria-label="Collapse all">${icon(12, 14, svg`<path d="M2 10.500 L6 6.500 L10 10.500" fill="none" stroke="#777" stroke-width="2"/><path d="M1.500 6.500 L6 2 L10.500 6.500" fill="none" stroke="#ccc" stroke-width="2.200"/>`)}</button>
      </div>`;
  }

  private renderBlocks() {
    return html`<div class="list">
      <div class="listview">
        <table>
          <colgroup><col style="width:${(407 / 756) * 100}%" /><col /></colgroup>
          <thead><tr><th>Name</th><th>Value</th></tr></thead>
          <tbody>
            ${blocks.map(([name, value], i) => html`<tr class=${classMap({ sel: i === 1 })}>
              <td><div class=${classMap({ name: true, root: i === 0 })}>${i === 0 ? expander : ""}${name}</div></td>
              <td class="iconic"><div class="val">${txt}${value}</div></td>
            </tr>`)}
          </tbody>
        </table>
      </div>
      <div class="vscroll">
        <button aria-label="Scroll up">${icon(8, 4, svg`<path d="M0 4 H8 L4 0Z" fill="#c8c8c8"/>`)}</button>
        <div class="vthumb"></div><span class="gap"></span>
        <button aria-label="Scroll down">${icon(8, 4, svg`<path d="M0 0 H8 L4 4Z" fill="#c8c8c8"/>`)}</button>
      </div>
    </div>`;
  }

  private renderDetails() {
    return html`<div class="details">
      <table>
        <colgroup><col style="width:${(133 / 770) * 100}%" /><col style="width:${(251 / 770) * 100}%" /><col /></colgroup>
        <thead><tr><th>Name</th><th>Value</th><th>Type</th></tr></thead>
        <tbody>
          <tr class="one"><td><div class="name">Name</div></td><td class="iconic"><div class="val">${txt}AttachT [166]</div></td><td>string</td></tr>
          <tr class="one"><td><div class="name">Num Strings</div></td><td>1</td><td>uint</td></tr>
          <tr class="top"><td><div class="name">${expander}Data</div></td><td class="iconic">${icon(14, 16, svg`<path d="M5 11 Q0 7 3 2 M1 2 H5 V5 M9 2 Q13 5 11 10 M13 10.500 H9 V7" fill="none" stroke="#5ad01a" stroke-width="2"/>`)}</td><td>SizedString</td></tr>
          <tr><td><div class="name">Data</div></td><td>NamedNode&amp;SPINE1</td><td>SizedString</td></tr>
        </tbody>
      </table>
    </div>`;
  }

  private renderWindow() {
    return html`<section class="window" aria-label="NifSkope">
      <header class="title">
        ${foxIcon(16)}<span class="cap">FoxTail.nif - NifSkope 2.0 Dev 7</span>
        <button aria-label="Minimize">${icon(11, 11, svg`<path d="M0 5.500 H10" stroke="#fff"/>`)}</button>
        <button aria-label="Maximize">${icon(11, 11, svg`<rect x="0.500" y="0.500" width="9" height="9" fill="none" stroke="#fff"/>`)}</button>
        <button aria-label="Close">${icon(11, 11, svg`<path d="M0.500 0.500 L10.500 10.500 M10.500 0.500 L0.500 10.500" stroke="#fff" stroke-width="1.200"/>`)}</button>
      </header>
      <nav class="menu">
        <button><span><u>F</u>ile</span></button><button>View</button><button>Render</button><button>Spells</button><button>Options</button><button>Help</button>
      </nav>
      <div class="tools">
        ${tools.map((t) => this.renderTool(t))}
        <div class="toggles">
          ${panelToggles.map(([label, on]) => html`<button class=${classMap({ toggle: true, on, plain: !on })}>${label}</button>`)}
        </div>
      </div>
      <div class="work">
        <div class="dock">
          ${this.renderDockHead("Block List")}
          ${this.renderBlocks()}
          <div class="dtabs"><button class="dtab">Block List</button><button class="dtab back">Archive Browser</button></div>
          <div class="hsplit">${gripDots(6, 1)}</div>
          ${this.renderDockHead("Block Details")}
          ${this.renderDetails()}
          <span class="vsplit">${gripDots(1, 6)}</span>
          <span class="mark"></span>
        </div>
        <div class="view">
          <span class="horizon"></span>
          <span class="axes">${icon(32, 34, svg`<path d="M28.500 2 V31" stroke="#00f" stroke-width="2"/><path d="M2 31.500 H28" stroke="#f00" stroke-width="2"/><circle cx="2.500" cy="31.500" r="1.800" fill="#f00"/><circle cx="28.500" cy="31.500" r="1.800" fill="#0f0"/>`)}</span>
          <span class="meter"></span>
        </div>
      </div>
      <footer class="status">
        <span>C:/Users/valco/AppData/Local/ModOrganizer/Fallout 4/mods/Tails and Ears - ESL AAF/Meshes/Clothes/AnimalTails/FoxTail.nif</span>
        <button aria-label="Browse">${icon(14, 14, svg`<path d="M4 4 H13 V13 H4Z" fill="#f0d6b4"/><path d="M2 8.500 H7 L8 10 H12.500 V13.500 H3.500Z" fill="#dcb277"/><path d="M4.500 8 Q0.500 7.500 1 4.500 Q2 1.500 5 2 V0.500 L8 3 L5 5 V4 Q3 4 4.500 8Z" fill="#367a8c"/>`)}</button>
        <span class="resize">${icon(8, 8, svg`<g fill="#999"><rect x="5" width="2" height="2"/><rect x="5" y="4" width="2" height="2"/><rect x="1" y="4" width="2" height="2"/></g>`)}</span>
      </footer>
    </section>`;
  }

  private renderTaskbar() {
    return html`<footer class="taskbar">
      <button class="start" aria-label="Start">${icon(16, 16, svg`<path d="M0 2.300 L6.700 1.300 V7.600 H0Z M7.600 1.100 L16 0 V7.600 H7.600Z M0 8.400 H6.700 V14.700 L0 13.700Z M7.600 8.400 H16 V16 L7.600 14.900Z" fill="#000"/>`)}</button>
      <label class="find">
        ${icon(16, 16, svg`<circle cx="10.500" cy="5.500" r="4.800" fill="none" stroke="#222" stroke-width="1.300"/><path d="M7 9 L0.500 15.500" stroke="#222" stroke-width="1.300"/>`)}
        <input type="text" placeholder="Type here to search" aria-label="Type here to search" />
      </label>
      <div class="apps">
        ${apps.map((a) => html`<button class=${classMap({ app: true, run: !!a.run, multi: a.run === "multi", active: !!a.active })} aria-label=${a.name}>${a.art}</button>`)}
      </div>
      <div class="tray">
        <button class="weather">${icon(24, 26, svg`<path d="M15 8 Q18 17 9 19.500 Q4 20.500 0.500 18 Q4 24.500 11 24.500 Q20 23.500 21 15 Q20.500 10 15 8Z" fill="url(#gMoon)"/><circle cx="16.500" cy="7.500" r="6.800" fill="#c42b1c"/><path d="M15 5.800 L17 4.500 V11" stroke="#fff" stroke-width="1.400" fill="none"/>`)}<span>54°F</span></button>
        <button class="t" aria-label="Show hidden icons">${icon(12, 8, svg`<path d="M1 7 L6 1.500 L11 7" fill="none" stroke="#111" stroke-width="1.300"/>`)}</button>
        <button class="t" aria-label="Battery">${icon(16, 14, svg`<path d="M6 3.500 h8.500 v7.500 h-8.500Z" fill="none" stroke="#111" stroke-width="1.300"/><path d="M7.500 5 h5.500 v4.500 h-5.500Z" fill="#111"/><path d="M15 5.500 h1 v3.500 h-1Z M0 2.500 h5 v3 q0 2 -2.500 2 q-2.500 0 -2.500 -2Z M1 0.500 h1 v2 h-1Z M3.500 0.500 h1 v2 h-1Z M2 7 h1.200 v4 h3 v1.200 h-4.200Z" fill="#111"/>`)}</button>
        <button class="t" aria-label="Meet Now">${icon(14, 16, svg`<path d="M2 5 h6.500 v6 h-6.500Z M8.500 7 L12 5.300 V10.700 L8.500 9 M3 2.300 Q7 -0.500 11 2.300 M3 13.700 Q7 16.500 11 13.700" fill="none" stroke="#111" stroke-width="1.200"/>`)}</button>
        <button class="t" aria-label="Network">${icon(16, 16, svg`<path d="M1 14 Q2 3 14 2.500 M4 14 Q5 6.500 14 6 M7.500 14 Q8 10 14 9.500" fill="none" stroke="#333" stroke-width="1.200"/><path d="M10.500 14.500 Q10.500 12 13.500 12 V14.500Z" fill="#111"/>`)}</button>
        <button class="t" aria-label="Volume">${icon(18, 14, svg`<path d="M1 5 h2.500 L7 1.500 V12.500 L3.500 9 H1Z M9 5 Q10.500 7 9 9 M11.500 3 Q14.500 7 11.500 11 M14 1 Q18.500 7 14 13" fill="none" stroke="#111" stroke-width="1.200"/>`)}</button>
        <button class="clock"><span>12:16 AM</span><span>3/18/2024</span></button>
        <button class="notes" aria-label="Notifications">${icon(18, 18, svg`<path d="M1 1 H16 V12 H10 L6 15.500 V12 H1Z" fill="#000"/><path d="M3.500 4 h10 M3.500 6.500 h10 M3.500 9 h6" stroke="#eee"/><circle cx="13.500" cy="12.500" r="4" fill="#000" stroke="#eee"/><path d="M12 14.500 L15 11" stroke="#eee"/>`)}</button>
        <span class="peek"></span>
      </div>
    </footer>`;
  }

  render() {
    return html`${gradients}
      <div class="desk">
        <nav class="side" aria-label="Sidebar">
          <button class="brand" aria-label="Opera menu">${operaLogo(22, 22)}</button>
          ${sideItems.map((s) => this.renderSide(s))}
          <button class="more" aria-label="Sidebar setup">${icon(16, 4, svg`<g fill="#3a4754"><circle cx="2" cy="2" r="1.500"/><circle cx="8" cy="2" r="1.500"/><circle cx="14" cy="2" r="1.500"/></g>`)}</button>
        </nav>
        ${this.renderBrowser()}
      </div>
      ${this.renderWindow()}
      ${this.renderTaskbar()}`;
  }
}
